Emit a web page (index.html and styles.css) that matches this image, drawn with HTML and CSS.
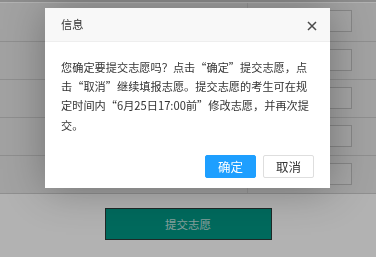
FILE: index.html
```html
<!DOCTYPE html>
<html lang="zh-CN">
<head>
    <meta charset="UTF-8">
    <meta name="viewport" content="width=device-width, initial-scale=1.0">
    <title>提交志愿</title>
    <link rel="stylesheet" href="styles.css">
</head>
<body>
    <div class="page">
        <table class="grid">
            <tr><td class="label"></td><td class="field"><input type="text"></td></tr>
            <tr><td class="label"></td><td class="field"><input type="text"></td></tr>
            <tr><td class="label"></td><td class="field"><input type="text"></td></tr>
            <tr><td class="label"></td><td class="field"><input type="text"></td></tr>
            <tr><td class="label"></td><td class="field"><input type="text"></td></tr>
        </table>
        <div class="actions">
            <button class="submit">提交志愿</button>
        </div>
    </div>

    <div class="shade"></div>

    <div class="layer">
        <div class="layer-title">信息</div>
        <a class="layer-close" href="#">
            <svg width="10" height="10" viewBox="0 0 10 10">
                <path d="M1 1L9 9M9 1L1 9" stroke="#4a4a4a" stroke-width="1.5" fill="none"/>
            </svg>
        </a>
        <div class="layer-content">您确定要提交志愿吗？点击“确定”提交志愿，点击“取消”继续填报志愿。提交志愿的考生可在规定时间内“6月25日17:00前”修改志愿，并再次提交。</div>
        <div class="layer-btns">
            <a class="btn btn-ok" href="#">确定</a>
            <a class="btn" href="#">取消</a>
        </div>
    </div>
</body>
</html>
```

FILE: styles.css
```css
* {
    margin: 0;
    padding: 0;
    box-sizing: border-box;
}

body {
    width: 376px;
    height: 257px;
    overflow: hidden;
    background-color: #fff;
    font-family: "Noto Sans CJK SC", "Noto Sans", sans-serif;
    color: #333;
}

.page {
    border-top: 2px solid #cbcbcb;
    padding-top: 1px;
}

.grid {
    width: 100%;
    border-collapse: collapse;
}

.grid td {
    height: 38px;
    background-color: #e9e9e9;
    border-bottom: 1px solid #cdcdcd;
    vertical-align: top;
}

.grid .label {
    width: 247px;
}

.grid .field {
    border-left: 1px solid #d6d6d6;
    padding: 7px 24px 0 10px;
}

.grid input {
    display: block;
    width: 100%;
    height: 22px;
    border: 1px solid #c2c2c2;
    background-color: #ececec;
}

.actions {
    display: flex;
    justify-content: center;
    padding-top: 14px;
}

.submit {
    width: 167px;
    height: 32px;
    background-color: #009986;
    border: 1px solid #2d3b39;
    color: rgba(255, 255, 255, 0.75);
    font-family: "Noto Sans CJK SC", sans-serif;
    font-size: 11.5px;
}

.shade {
    position: fixed;
    top: 0;
    left: 0;
    right: 0;
    bottom: 0;
    background-color: #000;
    opacity: 0.3;
}

.layer {
    position: absolute;
    left: 45px;
    top: 8px;
    width: 285px;
    background-color: #fff;
    box-shadow: 1px 1px 40px rgba(0, 0, 0, 0.3);
}

.layer-title {
    height: 34px;
    line-height: 33px;
    padding: 0 64px 0 16px;
    background-color: #f8f8f8;
    border-bottom: 1px solid #eee;
    font-size: 11.2px;
    color: #333;
}

.layer-close {
    position: absolute;
    top: 13px;
    right: 13px;
    width: 10px;
    height: 10px;
    display: block;
}

.layer-close svg {
    display: block;
}

.layer-content {
    padding: 16px;
    font-size: 11.2px;
    line-height: 19.2px;
    color: #333;
    word-break: break-all;
}

.layer-btns {
    display: flex;
    justify-content: flex-end;
    gap: 7px;
    padding: 4px 16px 10px;
}

.btn {
    display: block;
    height: 23px;
    line-height: 21px;
    padding: 0 12px;
    border: 1px solid #dedede;
    border-radius: 2px;
    background-color: #fff;
    color: #333;
    font-size: 12.5px;
    text-decoration: none;
}

.btn-ok {
    background-color: #1e9fff;
    border-color: #1e9fff;
    color: #fff;
}
```
